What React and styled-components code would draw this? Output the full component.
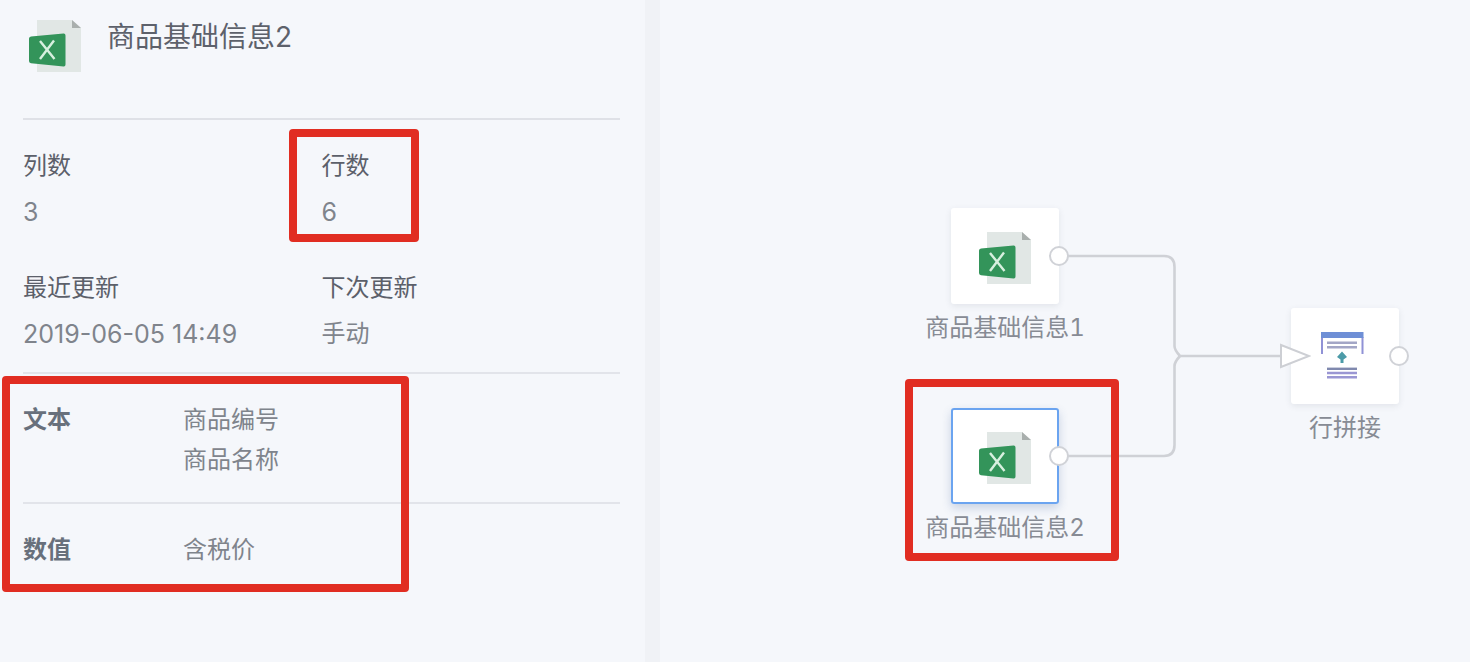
import React from 'react';
import styled, { createGlobalStyle, css } from 'styled-components';

const GlobalStyle = createGlobalStyle`
  *, *::before, *::after { box-sizing: border-box; }
  body {
    margin: 0;
    background: #f5f7fb;
    color: #7f848c;
    font-family: Inter, "Noto Sans CJK SC", sans-serif;
    font-size: 24px;
    line-height: 32px;
  }
`;

const Page = styled.div`
  display: grid;
  grid-template-columns: minmax(0, 645fr) 15px minmax(0, 810fr);
  min-height: 100vh;
`;

const Panel = styled.aside`
  padding: 0 25px 0 23px;
`;

const Splitter = styled.div`
  background: #f0f2f6;
`;

const Header = styled.header`
  display: flex;
  align-items: flex-start;
  gap: 25px;
  height: 120px;
  padding: 19px 0 0 5px;
  border-bottom: 2px solid #dfe1e7;
`;

const Title = styled.h1`
  margin: 0;
  color: #5d616b;
  font-size: 28px;
  font-weight: 400;
  line-height: 36px;
`;

const Stats = styled.dl`
  display: grid;
  grid-template-columns: 1fr 1fr;
  row-gap: 44px;
  margin: 0;
  padding: 30px 0 22px;
  border-bottom: 2px solid #e2e4ea;
`;

const Stat = styled.div`
  position: relative;
  display: flex;
  flex-direction: column;
  gap: 14px;
`;

const StatName = styled.dt`
  color: #5c606a;
`;

const StatValue = styled.dd`
  margin: 0;
  font-size: ${({ $numeric }) => ($numeric ? 25 : 24)}px;
`;

const Fields = styled.section`
  position: relative;
`;

const FieldGroup = styled.div`
  display: flex;
  padding: 26px 0 22px;
  line-height: 40px;

  & + & {
    border-top: 2px solid #e2e4ea;
  }
`;

const FieldType = styled.h2`
  flex: 0 0 160px;
  margin: 0;
  color: #68707c;
  font-size: 24px;
  font-weight: 700;
`;

const FieldList = styled.ul`
  margin: 0;
  padding: 0;
  list-style: none;
`;

const Highlight = styled.div`
  position: absolute;
  top: ${({ $top }) => $top}px;
  left: ${({ $left }) => $left}px;
  width: ${({ $width }) => $width}px;
  height: ${({ $height }) => $height}px;
  border: 8px solid #e12d22;
  border-radius: 4px;
  pointer-events: none;
`;

const Canvas = styled.main`
  position: relative;
  overflow: hidden;
`;

const Links = styled.svg`
  position: absolute;
  top: 0;
  left: 0;
`;

const NodeBox = styled.div`
  position: absolute;
  top: ${({ $y }) => $y}px;
  left: ${({ $x }) => $x}px;
  display: flex;
  flex-direction: column;
  align-items: center;
  gap: 8px;
  width: 108px;
`;

const NodeCard = styled.button`
  display: flex;
  align-items: center;
  justify-content: center;
  width: 108px;
  height: 96px;
  padding: 4px 0 0;
  border: 0;
  border-radius: 3px;
  background: #fff;
  box-shadow: 0 2px 6px rgba(60, 70, 90, 0.1);
  cursor: pointer;

  ${({ $selected }) =>
    $selected &&
    css`
      box-shadow: inset 0 0 0 2px #6ba4f0, 0 4px 10px rgba(60, 90, 150, 0.24);
    `}
`;

const NodeLabel = styled.span`
  color: #878b94;
  font-variant-numeric: tabular-nums;
  white-space: nowrap;
`;

const Port = styled.span`
  position: absolute;
  top: 38px;
  right: -10px;
  width: 20px;
  height: 20px;
  border: 2px solid #d0d2d7;
  border-radius: 50%;
  background: #fff;
`;

const InputArrow = styled.svg`
  position: absolute;
  top: 34px;
  left: -12px;
`;

function ExcelIcon() {
  return (
    <svg width="54" height="54" viewBox="0 0 54 54" aria-hidden="true">
      <path d="M9 1H44L53 9V53H9Z" fill="#e1e7e5" />
      <path d="M44 1L53 9H44Z" fill="#a9afad" />
      <path
        d="M3 17.4L35.5 14.6Q37.5 14.5 37.5 16.5V45.5Q37.5 47.6 35.5 47.4L3 44.3Q1 44 1 42V19.5Q1 17.6 3 17.4Z"
        fill="#33945a"
      />
      <path d="M12 22L26.5 40M26 21.5L12 40" stroke="#d7f0df" strokeWidth="2.4" fill="none" />
    </svg>
  );
}

function RowJoinIcon() {
  return (
    <svg width="54" height="54" viewBox="0 0 54 54" aria-hidden="true">
      <path d="M4 23V6M44.5 23V6" stroke="#9092d6" strokeWidth="2" />
      <path d="M3 1H45.5V7H3Z" fill="#6e8fd6" />
      <path d="M9 11.7H39M9 16.2H39" stroke="#a3a6c6" strokeWidth="2.6" />
      <path d="M24 20.5L29 26L25.5 28.5V32H22.5V28.5L19 26Z" fill="#4c9ba8" />
      <path d="M9 37.8H39" stroke="#8089ae" strokeWidth="2.4" />
      <path d="M9 42H39M9 46.3H39" stroke="#9a96d3" strokeWidth="2.4" />
    </svg>
  );
}

function FlowNode({ x, y, label, icon, selected, input, children }) {
  return (
    <NodeBox $x={x} $y={y}>
      <NodeCard type="button" aria-label={label} $selected={selected}>
        {icon}
      </NodeCard>
      <NodeLabel>{label}</NodeLabel>
      <Port />
      {input && (
        <InputArrow width="32" height="28" viewBox="0 0 32 28" aria-hidden="true">
          <path d="M2 3L30 14L2 25Z" fill="#fff" stroke="#cdcfd4" strokeWidth="2" />
        </InputArrow>
      )}
      {children}
    </NodeBox>
  );
}

const stats = [
  { name: '列数', value: '3', numeric: true },
  { name: '行数', value: '6', numeric: true, marked: true },
  { name: '最近更新', value: '2019-06-05 14:49', numeric: true },
  { name: '下次更新', value: '手动' },
];

const fieldGroups = [
  { type: '文本', fields: ['商品编号', '商品名称'] },
  { type: '数值', fields: ['含税价'] },
];

export default function App() {
  return (
    <>
      <GlobalStyle />
      <Page>
        <Panel>
          <Header>
            <ExcelIcon />
            <Title>商品基础信息2</Title>
          </Header>
          <Stats>
            {stats.map(({ name, value, numeric, marked }) => (
              <Stat key={name}>
                <StatName>{name}</StatName>
                <StatValue $numeric={numeric}>{value}</StatValue>
                {marked && <Highlight $top={-21} $left={-33} $width={130} $height={113} />}
              </Stat>
            ))}
          </Stats>
          <Fields>
            {fieldGroups.map(({ type, fields }) => (
              <FieldGroup key={type}>
                <FieldType>{type}</FieldType>
                <FieldList>
                  {fields.map((field) => (
                    <li key={field}>{field}</li>
                  ))}
                </FieldList>
              </FieldGroup>
            ))}
            <Highlight $top={2} $left={-21} $width={407} $height={216} />
          </Fields>
        </Panel>
        <Splitter />
        <Canvas>
          <Links width="810" height="662" viewBox="0 0 810 662" fill="none" aria-hidden="true">
            <g stroke="#cfd1d6" strokeWidth="2.6">
              <path d="M400 256H504Q514.500 256 514.500 267V346Q514.500 350 520 356H622" />
              <path d="M400 456H504Q514.500 456 514.500 445V366Q514.500 362 520 356" />
            </g>
          </Links>
          <FlowNode x={291} y={208} label="商品基础信息1" icon={<ExcelIcon />} />
          <FlowNode x={291} y={408} label="商品基础信息2" icon={<ExcelIcon />} selected>
            <Highlight $top={-29} $left={-46} $width={214} $height={182} />
          </FlowNode>
          <FlowNode x={631} y={308} label="行拼接" icon={<RowJoinIcon />} input />
        </Canvas>
      </Page>
    </>
  );
}
